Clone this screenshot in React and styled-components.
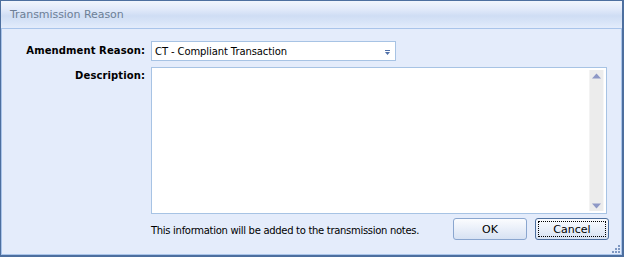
import styled, { createGlobalStyle } from "styled-components";

const Global = createGlobalStyle`
  html, body { margin: 0; padding: 0; }
  body { font-family: Tahoma, "DejaVu Sans", sans-serif; }
`;

const Window = styled.div`
  box-sizing: border-box;
  width: 624px;
  height: 257px;
  display: flex;
  flex-direction: column;
  border: 1px solid #4d6f9f;
  border-right-width: 2px;
  border-bottom-width: 2px;
  background: #e4ecfb;
  position: relative;
`;

const Header = styled.div`
  height: 27px;
  display: flex;
  align-items: center;
  padding-left: 9px;
  border-bottom: 1px solid #a9c4ea;
  background: linear-gradient(#f1f5fd 0%, #e2eafa 30%, #cfddf4 55%, #d9e5f8 80%, #e3ecfb 100%);
  color: #6d7f96;
  font-family: "DejaVu Sans", sans-serif;
  font-size: 11px;
  letter-spacing: -0.05px;
`;

const Body = styled.div`
  flex: 1;
  display: grid;
  grid-template-columns: 143px 1fr;
  grid-template-rows: 20px 1fr 22px;
  column-gap: 6px;
  row-gap: 6px;
  padding: 12px 14px 12px 0;
  border-left: 1px solid #a9c4ea;
  border-right: 1px solid #a9c4ea;
  border-bottom: 1px solid #a9c4ea;
  font-family: "DejaVu Sans", sans-serif;
  font-size: 10px;
  color: #000;
`;

const Label = styled.div`
  font-weight: bold;
  text-align: right;
  padding-top: ${(p) => p.top || 4}px;
  letter-spacing: 0.1px;
`;

const Combo = styled.div`
  box-sizing: border-box;
  width: 245px;
  height: 20px;
  border: 1px solid #a7c3e4;
  background: #fff;
  display: flex;
  align-items: center;
  justify-content: space-between;
  padding: 0 5px 0 3px;
  letter-spacing: -0.1px;
`;

const Arrow = styled.svg`
  width: 5px;
  height: 5px;
  margin-top: 2px;
`;

const TextArea = styled.div`
  box-sizing: border-box;
  border: 1px solid #a7c3e4;
  background: #fff;
  display: flex;
  justify-content: flex-end;
  padding: 2px;
`;

const Scroll = styled.div`
  width: 15px;
  background: linear-gradient(90deg, #f3f3f3 0 1px, #ececec 1px 14px, #f6f6f6 14px);
  display: flex;
  flex-direction: column;
  justify-content: space-between;
  align-items: center;
  padding: 3px 0 2px;
`;

const Footer = styled.div`
  display: flex;
  align-items: center;
  justify-content: space-between;
  margin-top: -2px;
  margin-bottom: 2px;
`;

const Note = styled.span`
  padding-top: 3px;
  letter-spacing: -0.3px;
`;

const Buttons = styled.div`
  display: flex;
  gap: 8px;
  margin-right: -2px;
`;

const Button = styled.div`
  box-sizing: border-box;
  width: 74px;
  height: 22px;
  border: 1px solid ${(p) => (p.focused ? "#4d6f9f" : "#8aa6cf")};
  border-radius: 3px;
  background: linear-gradient(#fbfcfe, #e9eff9 50%, #d7e2f3);
  display: flex;
  align-items: center;
  justify-content: center;
  font-size: 11px;
  padding: 2px;
  color: #000;
`;

const Focus = styled.span`
  box-sizing: border-box;
  width: 100%;
  height: 100%;
  display: flex;
  align-items: center;
  justify-content: center;
  border: ${(p) => (p.on ? "1px dotted #000" : "1px solid transparent")};
`;

const Grip = styled.svg`
  position: absolute;
  right: 1px;
  bottom: 1px;
  width: 10px;
  height: 10px;
`;

function ScrollArrow({ up }) {
  return (
    <svg width="9" height="6" viewBox="0 0 9 6">
      <path d={up ? "M0 5.5 H9 L4.5 0.5 Z" : "M0 0.5 H9 L4.5 5.5 Z"} fill="#8e98c6" />
    </svg>
  );
}

export default function App() {
  return (
    <>
      <Global />
      <Window>
        <Header>Transmission Reason</Header>
        <Body>
          <Label>Amendment Reason:</Label>
          <Combo>
            <span>CT - Compliant Transaction</span>
            <Arrow viewBox="0 0 5 5">
              <rect x="0" y="0" width="5" height="1" fill="#4f6fa8" />
              <path d="M0 2 H5 L2.5 5 Z" fill="#4f6fa8" />
            </Arrow>
          </Combo>
          <Label top={3}>Description:</Label>
          <TextArea>
            <Scroll>
              <ScrollArrow up />
              <ScrollArrow />
            </Scroll>
          </TextArea>
          <div />
          <Footer>
            <Note>This information will be added to the transmission notes.</Note>
            <Buttons>
              <Button>
                <Focus>OK</Focus>
              </Button>
              <Button focused>
                <Focus on>Cancel</Focus>
              </Button>
            </Buttons>
          </Footer>
        </Body>
        <Grip viewBox="0 0 10 10">
          {[[7, 1], [4, 4], [7, 4], [1, 7], [4, 7], [7, 7]].map(([x, y]) => (
            <rect key={`${x}-${y}`} x={x} y={y} width="2" height="2" fill="#7f98c2" />
          ))}
        </Grip>
      </Window>
    </>
  );
}
